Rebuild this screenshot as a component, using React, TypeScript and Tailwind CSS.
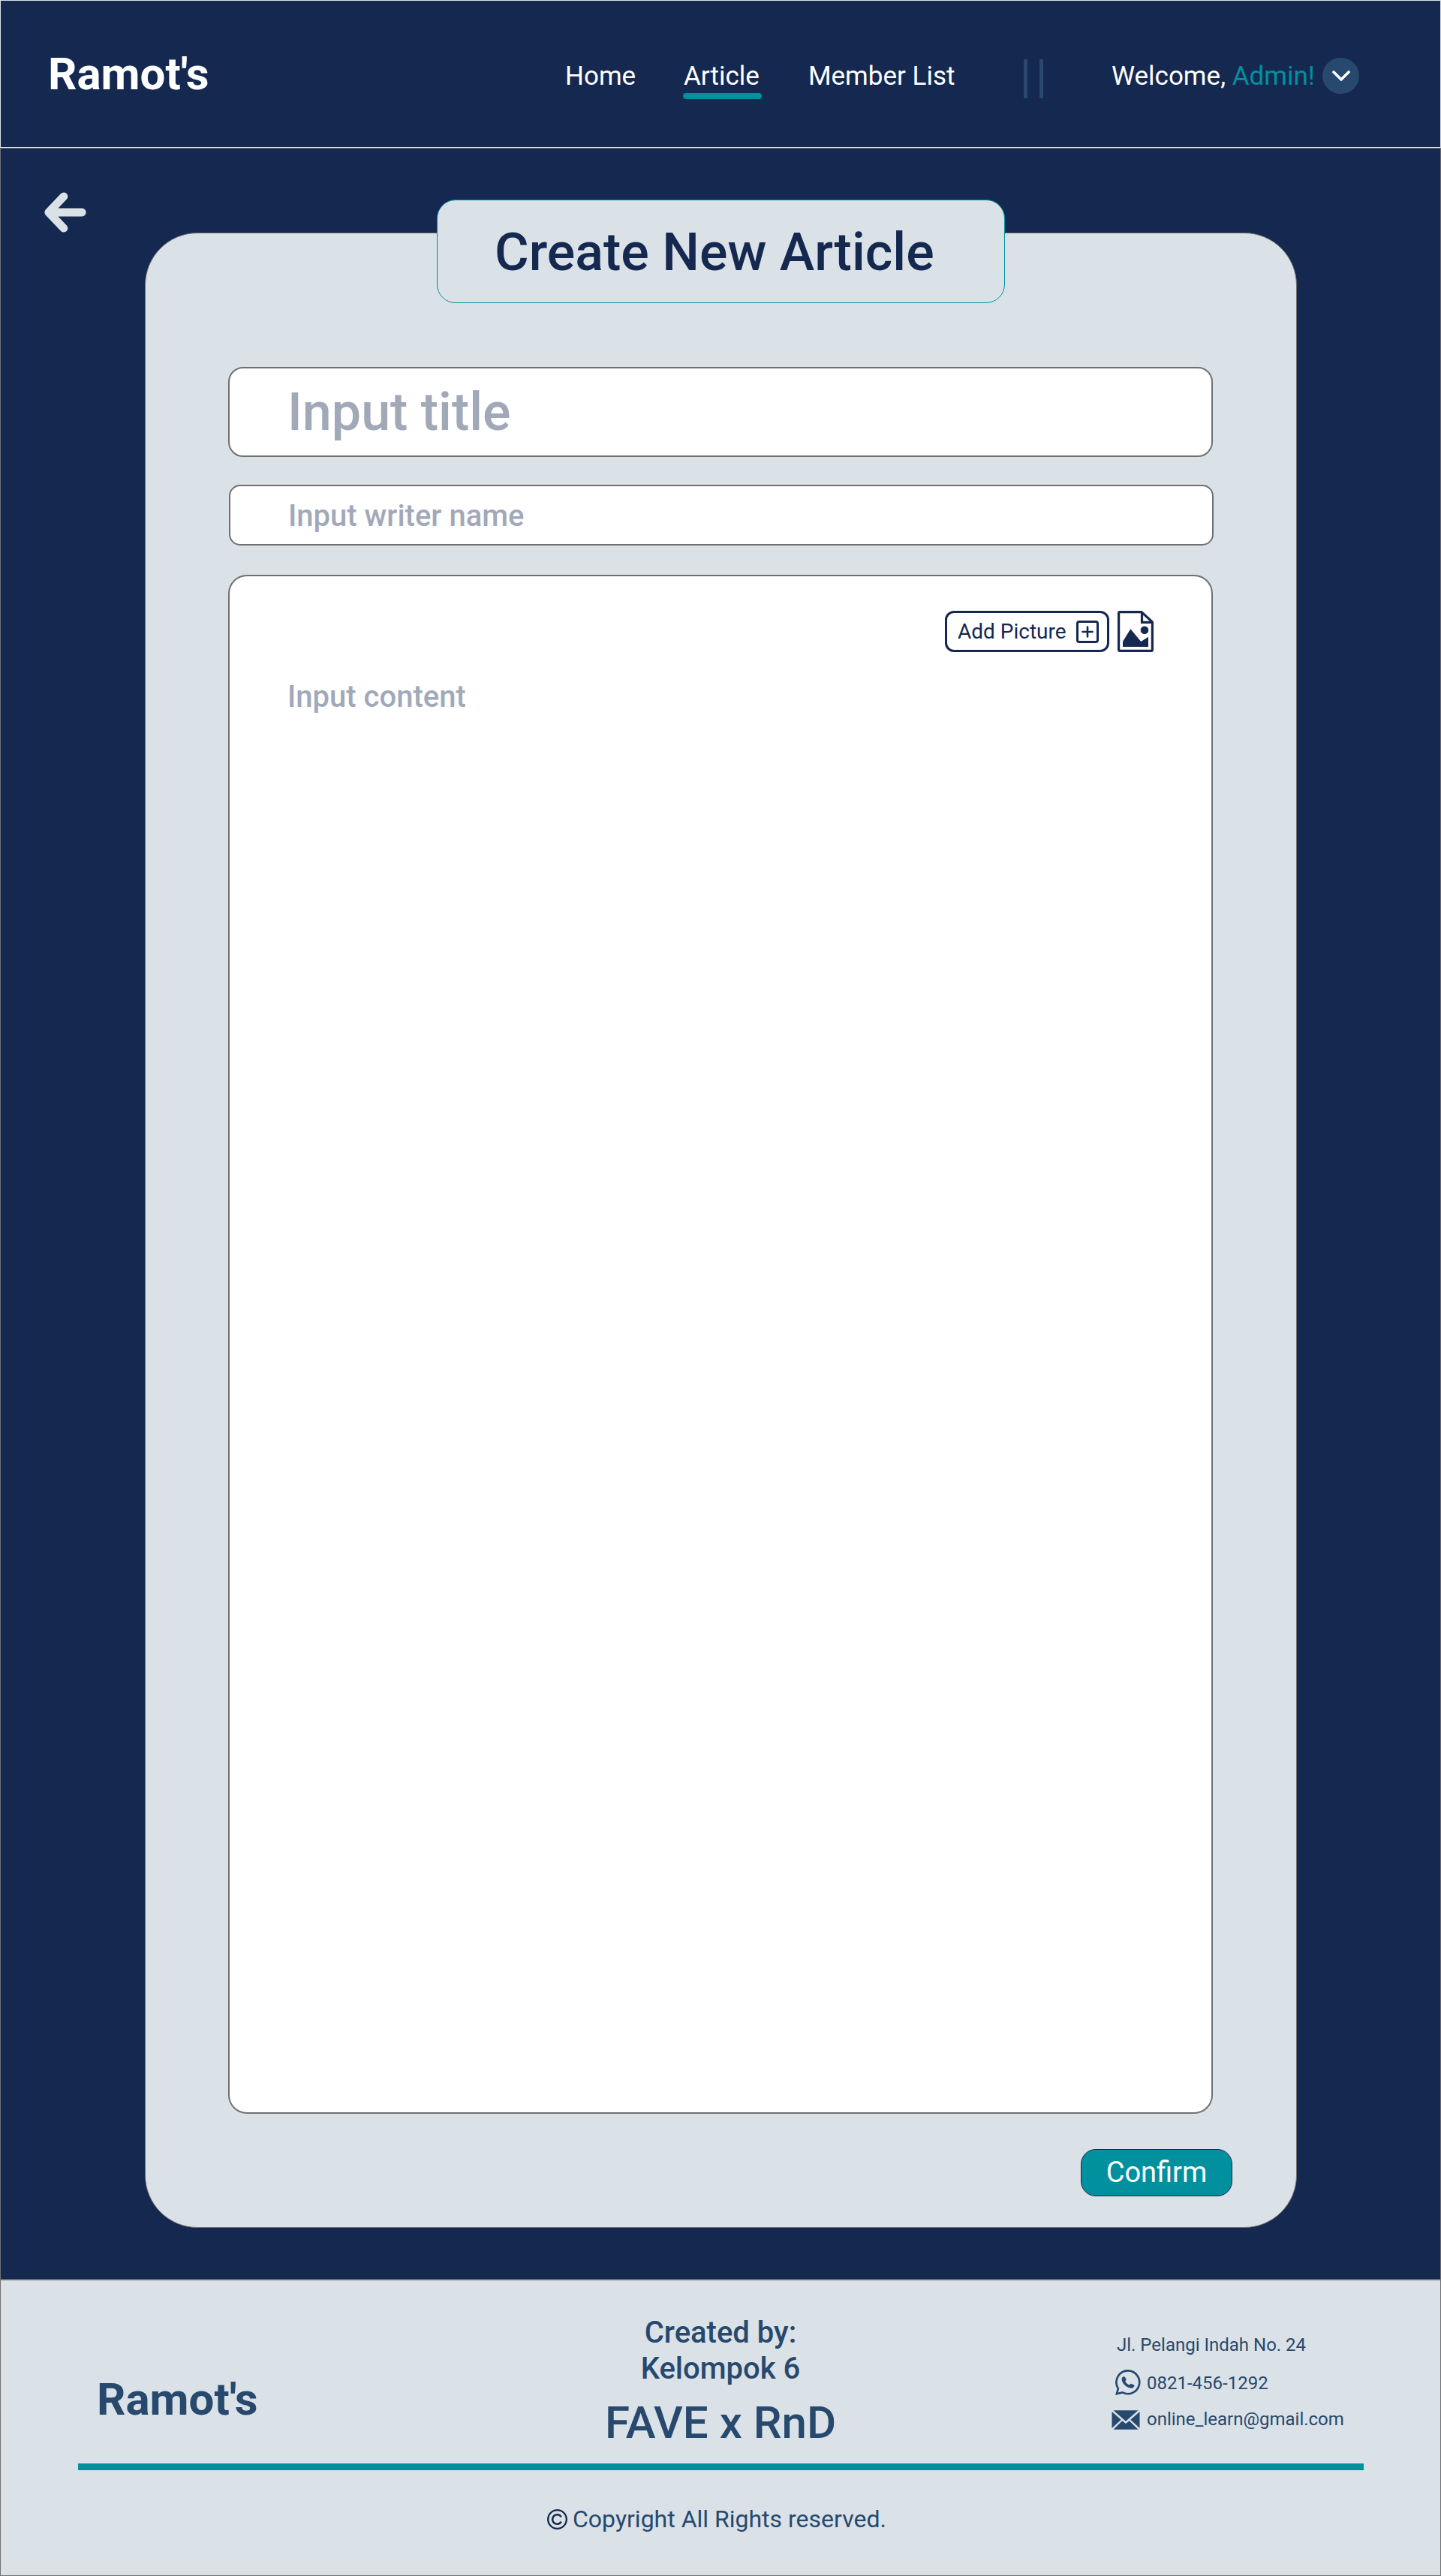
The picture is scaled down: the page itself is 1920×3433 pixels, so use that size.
import React from "react";

function PictureFileIcon() {
  return (
    <svg width="48" height="55" viewBox="0 0 48 55" fill="none" className="shrink-0 text-[#142850]">
      <path d="M3 1.6H32L46.4 15V52q0 1.4-1.4 1.4H3q-1.4 0-1.4-1.4V3q0-1.4 1.4-1.4Z" stroke="currentColor" strokeWidth="3.2" strokeLinejoin="round" />
      <path d="M32.5 2V15.4H46" stroke="currentColor" strokeWidth="3.2" />
      <circle cx="36" cy="25.8" r="5.3" fill="currentColor" />
      <path d="M7 48V41L17.3 24.3 31.3 41 41 34.8V48Z" fill="currentColor" />
    </svg>
  );
}

function PlusBoxIcon() {
  return (
    <svg width="30" height="30" viewBox="0 0 30 30" fill="none" stroke="#142850" className="shrink-0">
      <rect x="1.5" y="1.5" width="27" height="27" rx="2.5" strokeWidth="3" />
      <path d="M15 8.5V21.5M8.5 15H21.5" strokeWidth="2.6" strokeLinecap="round" />
    </svg>
  );
}

function WhatsAppIcon() {
  return (
    <svg width="34" height="34" viewBox="0 0 34 34" fill="none" className="shrink-0 text-[#27496d]">
      <path d="M17 1.4A15.4 15.4 0 1 1 9.6 30.4L1.9 32.200 3.9 25.1A15.4 15.4 0 0 1 17 1.4Z" stroke="currentColor" strokeWidth="2.6" />
      <path d="M10.300 9.600C11.200 8.900 12.400 9 13 9.900L14.300 12.400C14.700 13.200 14.500 13.900 13.900 14.500L13.200 15.300C14.500 17.800 16.300 19.500 18.700 20.600L19.800 19.400C20.300 18.800 20.900 18.700 21.600 19L24.600 20.200C25.500 20.600 25.700 21.300 25.300 22.200 24.400 24.200 22.500 24.900 20.300 24.500 14.500 23.400 9.900 19.300 8.800 14 8.400 12.100 8.900 10.600 10.300 9.600Z" fill="currentColor" />
    </svg>
  );
}

function MailIcon() {
  return (
    <svg width="38" height="26" viewBox="0 0 38 26" className="shrink-0 text-[#27496d]" fill="currentColor">
      <path d="M2.500.3H35.500L19 14.700Z" />
      <path d="M.5 2 12.700 12.800.5 24Z" />
      <path d="M37.500 2V24L25.300 12.800Z" />
      <path d="M2.500 25.700 14.300 14.300 19 18 23.700 14.300 35.500 25.700Z" />
    </svg>
  );
}

function CopyrightIcon() {
  return (
    <svg width="27" height="27" viewBox="0 0 27 27" fill="none" stroke="#142850" className="shrink-0">
      <circle cx="13.500" cy="13.500" r="12.300" strokeWidth="2.300" />
      <path d="M18.800 10.300A6.300 6.300 0 1 0 18.800 16.700" strokeWidth="2.600" />
    </svg>
  );
}

function Header() {
  return (
    <header className="flex h-[197px] w-full items-start border border-[#dae1e7] text-[35px] leading-[41px] text-white">
      <div className="mt-[63px] w-[689px] shrink-0 pl-[63px] text-[60px] leading-[70px] font-bold">Ramot's</div>
      <nav className="mt-[80px] flex items-start whitespace-nowrap">
        <a className="ml-[62px] w-[158px] shrink-0 pl-px">Home</a>
        <a className="flex w-[105px] shrink-0 flex-col">
          <span className="pl-px">Article</span>
          <span className="mt-[2px] h-2 rounded-full bg-[#00909e]" />
        </a>
        <a className="ml-[62px] w-[287px] shrink-0">Member List</a>
      </nav>
      <div className="mt-[78px] flex w-[26px] shrink-0 justify-between">
        <span className="h-[52px] w-[5px] bg-[#27496d]" />
        <span className="h-[52px] w-[5px] bg-[#27496d]" />
      </div>
      <div className="mt-[80px] ml-[91px] w-[281px] shrink-0 whitespace-nowrap">
        Welcome, <span className="text-[#00909e]">Admin!</span>
      </div>
      <button className="mt-[76px] flex h-[48px] w-[49px] shrink-0 items-center justify-center rounded-full bg-[#27496d]">
        <svg width="26" height="16" viewBox="0 0 26 16" fill="none" stroke="white" strokeWidth="3.600" strokeLinecap="round" strokeLinejoin="round">
          <path d="M3 3 13 13 23 3" />
        </svg>
      </button>
    </header>
  );
}

function ArticleForm() {
  return (
    <section className="relative mt-[112px] ml-[192px] flex h-[2659px] w-[1535px] flex-col rounded-[70px] border border-[#707070] bg-[#dae1e7] pl-[110px] font-medium text-[#a1a9b9]">
      <h1 className="absolute top-[-45px] left-[388px] flex h-[138px] w-[757px] items-center rounded-[25px] border border-[#00909e] bg-[#dae1e7] pt-[2px] pl-[76px] text-[70px] leading-none whitespace-nowrap text-[#142850]">
        Create New Article
      </h1>
      <div className="mt-[178px] flex h-[120px] w-[1312px] shrink-0 items-center rounded-[20px] border-2 border-[#707070] bg-white pl-[77px] text-[70px] leading-none">
        Input title
      </div>
      <div className="mt-[37px] ml-px flex h-[81px] w-[1312px] shrink-0 items-center rounded-[15px] border-2 border-[#707070] bg-white pt-[2px] pl-[77px] text-[40px] leading-none">
        Input writer name
      </div>
      <div className="mt-[39px] h-[2051px] w-[1312px] shrink-0 rounded-[25px] border-2 border-[#707070] bg-white pt-[46px]">
        <div className="flex justify-end gap-[11px] pr-[77px]">
          <button className="flex h-[55px] w-[219px] items-center justify-between rounded-[12px] border-[3px] border-[#142850] pr-[11px] pl-[14px] text-[28px] leading-none font-normal text-[#142850]">
            Add Picture
            <PlusBoxIcon />
          </button>
          <PictureFileIcon />
        </div>
        <p className="mt-[36px] pl-[77px] text-[40px] leading-[48px]">Input content</p>
      </div>
      <button className="mt-[47px] ml-[1136px] h-[63px] w-[202px] shrink-0 rounded-[20px] border border-[#142850] bg-[#00909e] pb-px text-[38px] leading-none font-normal text-white">
        Confirm
      </button>
    </section>
  );
}

function Footer() {
  return (
    <footer className="flex h-[395px] flex-col border border-[#707070] bg-[#dae1e7] text-[#27496d]">
      <div className="flex h-[244px] shrink-0 items-start">
        <div className="mt-[124px] w-[559px] shrink-0 pl-[128px] text-[60px] leading-[70px] font-bold">Ramot's</div>
        <div className="mt-[46px] w-[800px] shrink-0 text-center text-[40px] leading-[48px] font-medium">
          <p>Created by:</p>
          <p>Kelompok 6</p>
          <p className="mt-[13px] text-[60px] leading-[70px]">FAVE x RnD</p>
        </div>
        <div className="mt-[71px] ml-[121px] flex flex-col whitespace-nowrap text-[24px] leading-[30px]">
          <p className="pl-[7px]">Jl. Pelangi Indah No. 24</p>
          <div className="mt-[18px] flex h-[34px] items-center pl-[5px]">
            <WhatsAppIcon />
            <span className="ml-[8px] pt-[2px]">0821-456-1292</span>
          </div>
          <div className="mt-[18px] flex h-[30px] items-center">
            <MailIcon />
            <span className="ml-[9px] pb-[2px]">online_learn@gmail.com</span>
          </div>
        </div>
      </div>
      <div className="mr-[102px] ml-[102.500px] h-[9px] shrink-0 bg-[#00909e]" />
      <div className="mt-[46px] flex items-center pl-[728px] text-[32px] leading-[38px]">
        <CopyrightIcon />
        <span className="ml-[7px]">Copyright All Rights reserved.</span>
      </div>
    </footer>
  );
}

export default function App() {
  return (
    <div className="w-[1920px] bg-[#142850] font-['Roboto',sans-serif]">
      <Header />
      <main className="relative h-[2841px] border border-[#707070]">
        <button className="absolute top-[57px] left-[56px]">
          <svg width="60" height="56" viewBox="0 0 60 56" fill="none" stroke="#dae1e7" strokeWidth="10.800" strokeLinecap="round" strokeLinejoin="round">
            <path d="M28 6.800 7.800 28 28 49.200M7.800 28H52.300" />
          </svg>
        </button>
        <div className="flex">
          <ArticleForm />
        </div>
      </main>
      <Footer />
    </div>
  );
}
